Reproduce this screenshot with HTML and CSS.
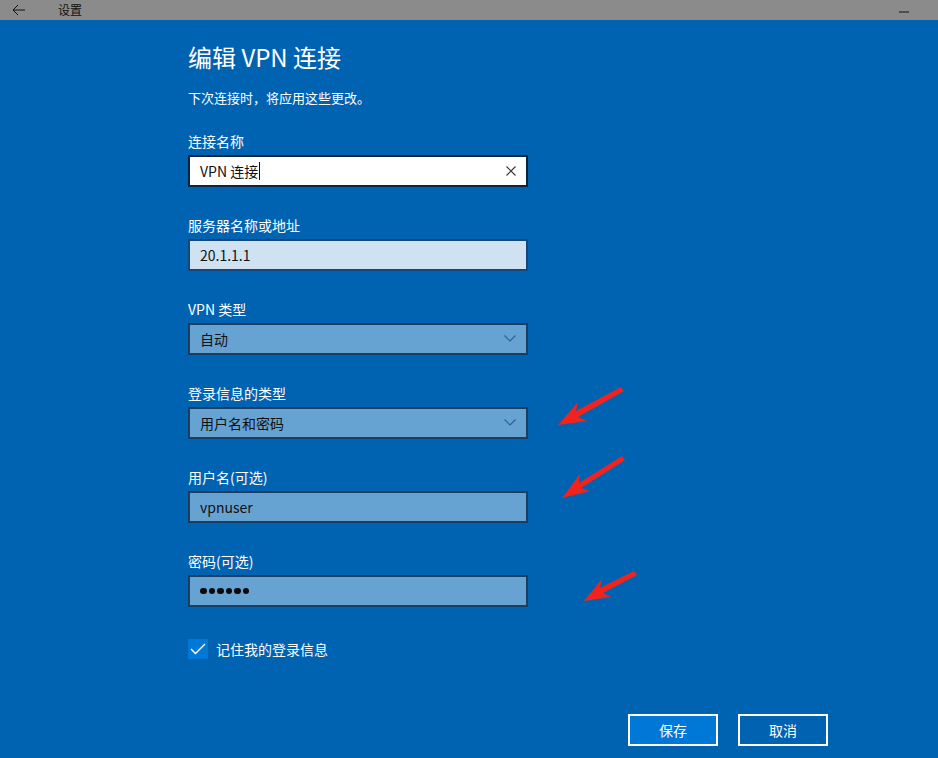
FILE: index.html
```html
<!DOCTYPE html>
<html lang="zh">
<head>
  <meta charset="UTF-8">
  <meta name="viewport" content="width=device-width, initial-scale=1.0">
  <title>设置</title>
  <link rel="stylesheet" href="styles.css">
</head>
<body>
  <!-- 标题栏 -->
  <div class="titlebar">
    <span class="back">
      <svg width="14" height="12" viewBox="0 0 14 12"><path d="M6 1 L1 6 L6 11 M1 6 H13" fill="none" stroke="#111" stroke-width="1"/></svg>
    </span>
    <span class="app-name">设置</span>
    <span class="min">
      <svg width="10" height="2" viewBox="0 0 10 2"><path d="M0 1 H10" stroke="#111" stroke-width="1"/></svg>
    </span>
  </div>

  <!-- 主体 -->
  <div class="page">
    <div class="form">
      <h1 class="title">编辑 VPN 连接</h1>
      <p class="subtitle">下次连接时，将应用这些更改。</p>

      <div class="field">
        <label>连接名称</label>
        <div class="box box-edit">
          <span class="value">VPN 连接<span class="caret"></span></span>
          <svg class="clear" width="10" height="10" viewBox="0 0 10 10"><path d="M0.5 0.5 L9.5 9.5 M9.5 0.5 L0.5 9.5" stroke="#333" stroke-width="1.1"/></svg>
        </div>
      </div>

      <div class="field">
        <label>服务器名称或地址</label>
        <div class="box box-light"><span class="value">20.1.1.1</span></div>
      </div>

      <div class="field">
        <label>VPN 类型</label>
        <div class="box box-select">
          <span class="value">自动</span>
          <svg class="chevron" width="12" height="7" viewBox="0 0 12 7"><path d="M0.5 0.5 L6 6 L11.5 0.5" fill="none" stroke="#2d5f8f" stroke-width="1.1"/></svg>
        </div>
      </div>

      <div class="field">
        <label>登录信息的类型</label>
        <div class="box box-select">
          <span class="value">用户名和密码</span>
          <svg class="chevron" width="12" height="7" viewBox="0 0 12 7"><path d="M0.5 0.5 L6 6 L11.5 0.5" fill="none" stroke="#2d5f8f" stroke-width="1.1"/></svg>
        </div>
      </div>

      <div class="field">
        <label>用户名(可选)</label>
        <div class="box box-select"><span class="value">vpnuser</span></div>
      </div>

      <div class="field">
        <label>密码(可选)</label>
        <div class="box box-select">
          <span class="dots"><i></i><i></i><i></i><i></i><i></i><i></i></span>
        </div>
      </div>

      <div class="remember">
        <span class="check">
          <svg width="16" height="12" viewBox="0 0 16 12"><path d="M1 6 L5.5 10.5 L15 1" fill="none" stroke="#fff" stroke-width="1.4"/></svg>
        </span>
        <span>记住我的登录信息</span>
      </div>

      <div class="actions">
        <button class="btn btn-primary">保存</button>
        <button class="btn">取消</button>
      </div>
    </div>

    <!-- 红色标注箭头 -->
    <svg class="mark" width="938" height="738" viewBox="0 20 938 738">
      <g fill="#f0231e">
        <path d="M621 387 L576 411 L578 402 L558 425 L587 421 L578 417 L624 391 Z"/>
        <path d="M622 456 L579 483 L580 474 L562 498 L590 491 L581 488 L625 460 Z"/>
        <path d="M634 571 L600 588 L602 579 L584 601 L611 597 L603 593 L637 575 Z"/>
      </g>
    </svg>
  </div>
</body>
</html>
```

FILE: styles.css
```css
/* 基本设置 */
body {
  margin: 0;
  font-family: "Noto Sans CJK SC", "Noto Sans", sans-serif;
  background-color: #0063b1;
  color: white;
}

/* 标题栏 */
.titlebar {
  height: 20px;
  background-color: #8b8b8b;
  display: flex;
  align-items: center;
  color: #111;
  font-size: 12px;
}

.back {
  display: flex;
  margin-left: 12px;
}

.app-name {
  margin-left: 32px;
  line-height: 20px;
}

.min {
  display: flex;
  margin-left: auto;
  margin-right: 29px;
  margin-top: 4px;
}

/* 主体 */
.page {
  position: relative;
  height: 738px;
  overflow: hidden;
}

.form {
  display: flex;
  flex-direction: column;
  padding: 22px 0 0 188px;
  width: 640px;
}

.title {
  margin: 0;
  font-size: 24px;
  font-weight: normal;
  line-height: 30px;
}

.subtitle {
  margin: 17px 0 25px;
  font-size: 13px;
  line-height: 18px;
}

/* 表单项 */
.field {
  display: flex;
  flex-direction: column;
  gap: 5px;
  margin-bottom: 29px;
}

.field label {
  font-size: 14px;
  line-height: 18px;
}

.box {
  box-sizing: border-box;
  width: 340px;
  height: 32px;
  border: 2px solid #1a3a5c;
  display: flex;
  align-items: center;
  padding: 0 10px 1px;
  color: #111;
  font-size: 14px;
}

.box-edit {
  background-color: #fff;
  border-color: #0b2440;
}

.box-light {
  background-color: #cfe2f2;
  border-color: #17477a;
}

.box-select {
  background-color: #66a3d3;
  border-color: #1b3d62;
}

.value {
  display: flex;
  align-items: center;
  line-height: 20px;
}

.caret {
  display: inline-block;
  width: 1px;
  height: 18px;
  background-color: #111;
  margin-left: 1px;
}

.clear {
  margin-left: auto;
}

.chevron {
  margin-left: auto;
}

/* 密码圆点 */
.dots {
  display: flex;
  gap: 2px;
  padding-top: 1px;
}

.dots i {
  width: 6.5px;
  height: 6.5px;
  border-radius: 50%;
  background-color: #0a0a0a;
}

/* 记住登录信息 */
.remember {
  display: flex;
  align-items: center;
  gap: 8px;
  margin-top: 3px;
  font-size: 14px;
  line-height: 20px;
}

.check {
  width: 20px;
  height: 20px;
  background-color: #0078d7;
  display: flex;
  align-items: center;
  justify-content: center;
}

/* 按钮 */
.actions {
  display: flex;
  gap: 20px;
  margin-top: 55px;
  margin-left: 440px;
}

.btn {
  box-sizing: border-box;
  width: 90px;
  height: 32px;
  border: 2px solid #fff;
  background-color: #0063b1;
  color: #fff;
  font-family: inherit;
  font-size: 14px;
  padding: 0;
}

.btn-primary {
  background-color: #0078d7;
}

/* 标注箭头 */
.mark {
  position: absolute;
  left: 0;
  top: 0;
  pointer-events: none;
}
```
